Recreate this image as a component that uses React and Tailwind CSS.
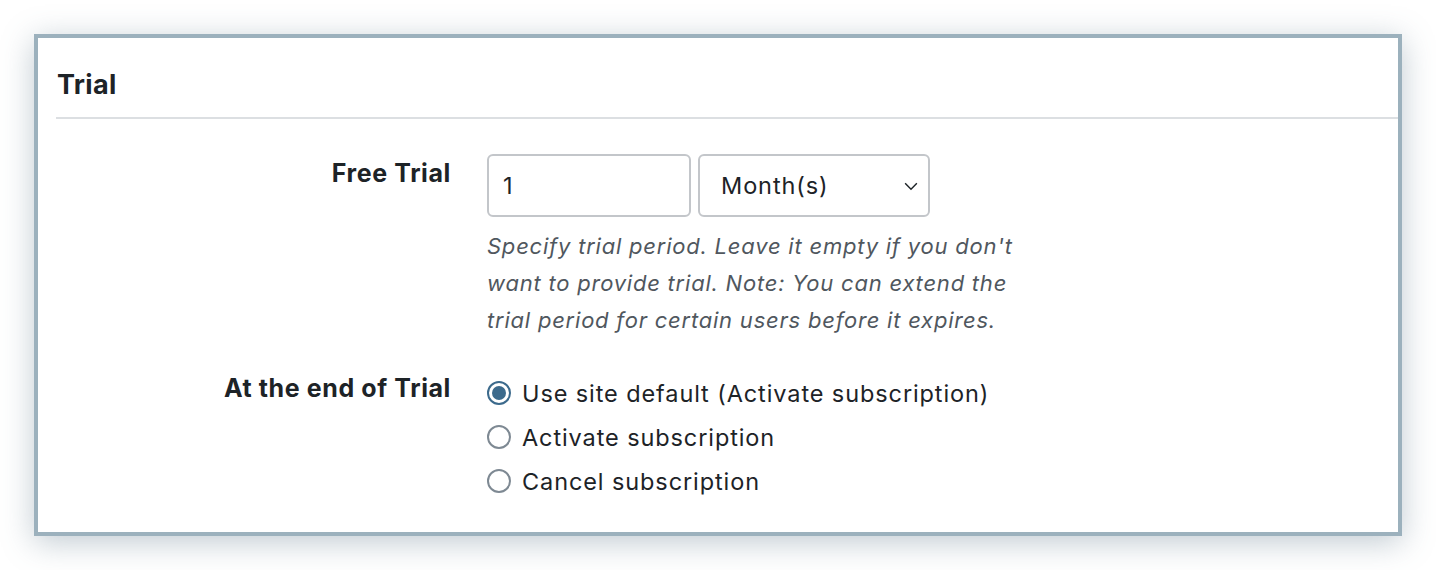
import { useState } from 'react';

const options = [
  'Use site default (Activate subscription)',
  'Activate subscription',
  'Cancel subscription',
];

export default function App() {
  const [choice, setChoice] = useState(0);

  return (
    <div className="w-[1436px] h-[570px] bg-white pt-[34px] pl-[34px] font-['Inter',sans-serif] text-[#1d2327]">
      <div className="w-[1368px] h-[502px] border-4 border-[#9cb1bd] bg-white shadow-[0_6px_30px_rgba(90,115,135,0.38)]">
        {/* Heading */}
        <h2 className="pl-[19px] pt-[29px] pb-[14px] text-[27px] leading-[36px] font-bold tracking-[0.3px]">Trial</h2>
        <div className="ml-[18px] h-[2px] bg-[#dcdfe2]" />

        {/* Free Trial */}
        <div className="flex mt-[35px]">
          <div className="w-[413px] shrink-0 text-right text-[25px] leading-[30px] font-bold tracking-[0.6px] pt-[4px]">Free Trial</div>
          <div className="ml-[36px]">
            <div className="flex gap-[7px]">
              <input
                type="text"
                defaultValue="1"
                className="w-[204px] h-[63px] rounded-[6px] border-2 border-[#c3c6ca] px-[14px] text-[23.5px] tracking-[0.9px] outline-none"
              />
              <div className="w-[232px] h-[63px] rounded-[6px] border-2 border-[#c3c6ca] pl-[21px] pr-[8px] flex items-center justify-between text-[23.5px] tracking-[0.9px]">
                <span>Month(s)</span>
                <svg width="18" height="18" viewBox="0 0 20 20" fill="none" stroke="#1d2327" strokeWidth="1.6">
                  <path d="M3.5 7l6.5 6.5L16.5 7" />
                </svg>
              </div>
            </div>
            <p className="mt-[11px] w-[532px] text-[22px] leading-[37px] italic tracking-[0.78px] text-[#50575e]">
              Specify trial period. Leave it empty if you don't want to provide trial. Note: You can extend the trial period for certain users before it expires.
            </p>
          </div>
        </div>

        {/* At the end of Trial */}
        <div className="flex mt-[33px]">
          <div className="w-[413px] shrink-0 text-right text-[25px] leading-[30px] font-bold tracking-[0.6px] pt-[1px]">At the end of Trial</div>
          <div className="ml-[36px] flex flex-col">
            {options.map((opt, i) => (
              <label key={opt} onClick={() => setChoice(i)} className="h-[44px] flex items-center gap-[11px] text-[23.5px] tracking-[0.9px] cursor-pointer">
                <span
                  className={
                    choice === i
                      ? 'w-[24px] h-[24px] rounded-full border-2 border-[#3c6a8c] flex items-center justify-center -mt-[3px]'
                      : 'w-[24px] h-[24px] rounded-full border-2 border-[#7e8993] -mt-[3px]'
                  }
                >
                  {choice === i && <span className="w-[14px] h-[14px] rounded-full bg-[#3c6a8c]" />}
                </span>
                {opt}
              </label>
            ))}
          </div>
        </div>
      </div>
    </div>
  );
}
